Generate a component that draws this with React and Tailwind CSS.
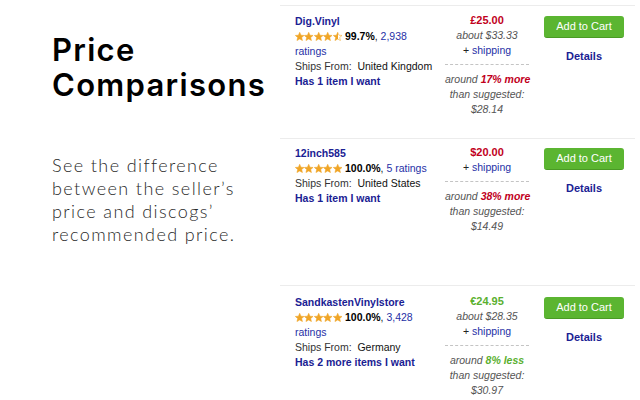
import React from "react";

const Star = ({ half = false, id }) => (
  <svg width="9.4" height="9" viewBox="0 0 24 23" className="shrink-0">
    <defs>
      <linearGradient id={id}>
        <stop offset="50%" stopColor="#f0a526" />
        <stop offset="50%" stopColor="#ffffff" />
      </linearGradient>
    </defs>
    <polygon
      points="12,0.8 15.2,8.2 23.2,8.8 17.1,14 19,21.9 12,17.7 5,21.9 6.9,14 0.8,8.8 8.8,8.2"
      fill={half ? `url(#${id})` : "#f0a526"}
      stroke="#f0a526"
      strokeWidth="1.4"
      strokeLinejoin="round"
    />
  </svg>
);

const Stars = ({ halfLast, idp }) => (
  <span className="inline-flex items-center mr-[3px] align-[-1px]">
    {[0, 1, 2, 3, 4].map((i) => (
      <Star key={i} id={`${idp}${i}`} half={halfLast && i === 4} />
    ))}
  </span>
);

const Row = ({ r, height, pt }) => (
  <div
    className="flex border-t border-[#ececec] pl-[15px] shrink-0"
    style={{ height, paddingTop: pt }}
  >
    <div className="w-[140px] mr-[10px] text-[10.5px] leading-[15px] text-[#222]">
      <div className="font-bold text-[#1a2193]">{r.name}</div>
      <div>
        <Stars halfLast={r.half} idp={r.name.replace(/\W/g, "")} />
        <span className="font-bold text-black">{r.pct}</span>,{" "}
        <span className="text-[#2630a6]">{r.ratings}</span>
      </div>
      <div className="text-[#333] whitespace-nowrap">
        Ships From:&nbsp; <span className="text-[#111]">{r.ships}</span>
      </div>
      <div className="font-bold text-[#1a2193]">{r.has}</div>
    </div>
    <div className="w-[84px] text-center text-[10.5px] leading-[15px] -mt-[1px] whitespace-nowrap">
      <div className={`font-bold text-[11px] ${r.green ? "text-[#5ab02f]" : "text-[#c1001c]"}`}>{r.price}</div>
      {r.about && <div className="italic text-[#555]">{r.about}</div>}
      <div className="text-[#222]">
        + <span className="text-[#2630a6]">shipping</span>
      </div>
      <div className="border-t border-dashed border-[#c4c4c4] mt-[6px] mb-[7px]" />
      <div className="italic text-[#555]">
        around{" "}
        <span className={`font-bold ${r.green ? "text-[#5ab02f]" : "text-[#c1001c]"}`}>{r.diff}</span>
      </div>
      <div className="italic text-[#555]">than suggested:</div>
      <div className="italic text-[#555]">{r.sugg}</div>
    </div>
    <div className="ml-[15px] w-[80px] flex flex-col items-center text-[11px]">
      <div className="mt-[2px] w-[80px] h-[22px] rounded-[3px] bg-[#5bb531] text-white flex items-center justify-center leading-none border-b border-[#4a9a25]">
        Add to Cart
      </div>
      <div className="mt-[11px] font-bold text-[#1a2193] leading-[15px]">Details</div>
    </div>
  </div>
);

const rows = [
  {
    name: "Dig.Vinyl",
    half: true,
    pct: "99.7%",
    ratings: "2,938 ratings",
    ships: "United Kingdom",
    has: "Has 1 item I want",
    price: "£25.00",
    about: "about $33.33",
    diff: "17% more",
    sugg: "$28.14",
  },
  {
    name: "12inch585",
    pct: "100.0%",
    ratings: "5 ratings",
    ships: "United States",
    has: "Has 1 item I want",
    price: "$20.00",
    diff: "38% more",
    sugg: "$14.49",
  },
  {
    name: "SandkastenVinylstore",
    pct: "100.0%",
    ratings: "3,428 ratings",
    ships: "Germany",
    has: "Has 2 more items I want",
    price: "€24.95",
    about: "about $28.35",
    diff: "8% less",
    sugg: "$30.97",
    green: true,
  },
];

export default function App() {
  return (
    <div
      className="w-[640px] h-[400px] bg-white flex overflow-hidden"
      style={{ fontFamily: '"Liberation Sans", Arial, sans-serif' }}
    >
      <div className="w-[280px] shrink-0 pl-[52px] pt-[32px]">
        <div
          className="text-[31px] leading-[35px] font-semibold text-black tracking-[1.3px]"
          style={{ fontFamily: 'Inter, "Noto Sans", sans-serif' }}
        >
          Price
          <br />
          Comparisons
        </div>
        <div
          className="mt-[52px] text-[18px] leading-[23px] font-light text-[#2a2a2a] tracking-[1.4px]"
          style={{ fontFamily: 'Lato, "Open Sans", sans-serif' }}
        >
          See the difference
          <br />
          between the seller’s
          <br />
          price and discogs’
          <br />
          recommended price.
        </div>
      </div>
      <div className="flex-1 flex flex-col pt-[5px] pr-[5px]">
        <Row r={rows[0]} height={133} pt={8} />
        <Row r={rows[1]} height={147} pt={7} />
        <Row r={rows[2]} height={120} pt={9} />
      </div>
    </div>
  );
}
